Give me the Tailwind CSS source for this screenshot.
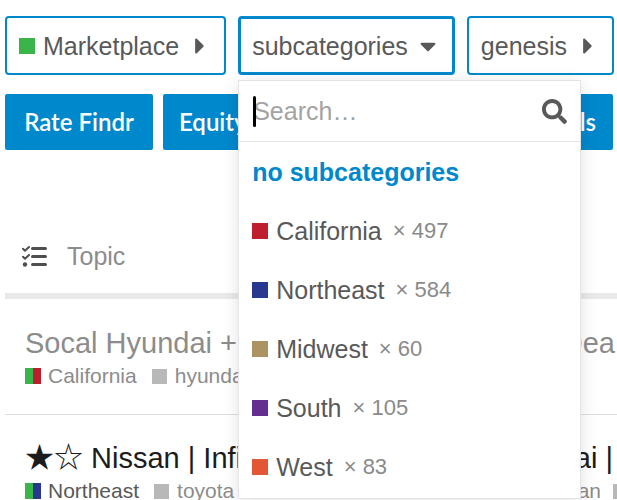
<!DOCTYPE html>
<html lang="en">
<head>
<meta charset="utf-8">
<meta name="viewport" content="width=device-width, initial-scale=1">
<title>Marketplace topics</title>
<script src="https://cdn.jsdelivr.net/npm/@tailwindcss/browser@4"></script>
</head>
<body class="h-screen overflow-hidden bg-white font-['Liberation_Sans','Noto_Sans_CJK_JP',sans-serif] text-[#595959]">
<svg class="hidden">
  <symbol id="caret-right" viewBox="0 0 192 512"><path d="M0 384.662V127.338c0-17.818 21.543-26.741 34.142-14.142l128.662 128.662c7.81 7.81 7.81 20.474 0 28.284L34.142 398.804C21.543 411.404 0 402.48 0 384.662z"/></symbol>
</svg>

<nav aria-label="Filters" class="flex gap-3 pt-4 pl-[5px] text-[25px] leading-[30px]">
  <button type="button" class="flex h-[59px] shrink-0 items-center rounded border-2 border-[#0088cc] pr-[19px] pl-3">
    <span class="mr-2 size-4 bg-[#3ab54a]"></span>
    <span class="mr-4">Marketplace</span>
    <svg class="h-[26px] w-[10px] fill-current" aria-hidden="true"><use href="#caret-right"/></svg>
  </button>

  <div class="relative shrink-0">
    <button type="button" aria-haspopup="listbox" aria-expanded="true" class="flex h-[59px] items-center gap-3 rounded border-3 border-[#0088cc] pr-4 pl-[11px]">
      <span>subcategories</span>
      <svg class="h-[26px] w-4 fill-current" viewBox="0 0 320 512" aria-hidden="true"><path d="M31.3 192h257.3c17.8 0 26.7 21.5 14.1 34.1L174.1 354.8c-7.8 7.8-20.5 7.8-28.3 0L17.2 226.1C4.6 213.5 13.5 192 31.3 192z"/></svg>
    </button>

    <div class="absolute top-full left-0 z-10 mt-[5px] w-[343px] border border-[#e4e4e4] bg-white shadow-[0_3px_16px_rgba(0,0,0,0.12)]">
      <div class="relative flex h-[61px] items-center border-b border-[#e4e4e4] pr-[13px] pl-[14px]">
        <input type="text" aria-label="Search subcategories" placeholder="Search…" class="min-w-0 flex-1 outline-none placeholder:text-[#a3a3a3]">
        <span class="absolute left-[14px] h-[31px] w-[3px] rounded-full bg-black"></span>
        <svg class="size-[25px] fill-current" viewBox="0 0 512 512" aria-hidden="true"><path d="M505 442.7L405.3 343c-4.5-4.5-10.6-7-17-7H372c27.6-35.3 44-79.7 44-128C416 93.1 322.9 0 208 0S0 93.1 0 208s93.1 208 208 208c48.3 0 92.7-16.4 128-44v16.3c0 6.4 2.5 12.5 7 17l99.7 99.7c9.4 9.4 24.6 9.4 33.9 0l28.3-28.3c9.4-9.4 9.4-24.6.1-34zM208 336c-70.7 0-128-57.2-128-128 0-70.7 57.2-128 128-128 70.7 0 128 57.2 128 128 0 70.7-57.2 128-128 128z"/></svg>
      </div>
      <ul class="pb-[2px]">
        <li><button type="button" class="flex h-[59px] w-full items-center px-[13px] font-bold text-[#0088cc]">no subcategories</button></li>
        <li><button type="button" class="flex h-[59px] w-full items-center px-[13px]"><span class="mr-2 size-4 bg-[#bf1e2e]"></span>California<span class="ml-[11px] text-[22px] text-[#8a8a8a]">× 497</span></button></li>
        <li><button type="button" class="flex h-[59px] w-full items-center px-[13px]"><span class="mr-2 size-4 bg-[#283890]"></span>Northeast<span class="ml-[11px] text-[22px] text-[#8a8a8a]">× 584</span></button></li>
        <li><button type="button" class="flex h-[59px] w-full items-center px-[13px]"><span class="mr-2 size-4 bg-[#ab9364]"></span>Midwest<span class="ml-[11px] text-[22px] text-[#8a8a8a]">× 60</span></button></li>
        <li><button type="button" class="flex h-[59px] w-full items-center px-[13px]"><span class="mr-2 size-4 bg-[#652d90]"></span>South<span class="ml-[11px] text-[22px] text-[#8a8a8a]">× 105</span></button></li>
        <li><button type="button" class="flex h-[59px] w-full items-center px-[13px]"><span class="mr-2 size-4 bg-[#e45735]"></span>West<span class="ml-[11px] text-[22px] text-[#8a8a8a]">× 83</span></button></li>
      </ul>
    </div>
  </div>

  <button type="button" class="flex h-[59px] shrink-0 items-center gap-4 rounded border-2 border-[#0088cc] pr-[19px] pl-3">
    <span>genesis</span>
    <svg class="h-[26px] w-[10px] fill-current" aria-hidden="true"><use href="#caret-right"/></svg>
  </button>
</nav>

<div class="mt-[19px] flex gap-[10px] pr-1 pl-[5px] font-['Lato',sans-serif] text-[24px] leading-[30px] font-semibold text-white">
  <a href="#" class="flex h-14 w-[148px] items-center justify-center rounded-xs bg-[#0088cc]">Rate Findr</a>
  <a href="#" class="flex h-14 w-[148px] items-center rounded-xs bg-[#0088cc] pl-4">Equity</a>
  <a href="#" class="ml-auto flex h-14 w-[148px] items-center justify-end rounded-xs bg-[#0088cc] pr-[17px]">Deals</a>
</div>

<main class="pt-[75px] pl-[5px]">
  <div class="flex h-[74px] items-center gap-5 border-b-6 border-[#e9e9e9] pb-1 pl-[17px] text-[25px] text-[#8c8c8c]">
    <button type="button" aria-label="Select topics" class="text-[#4f4f4f]">
      <svg class="h-[22px] w-[25px]" viewBox="0 0 25 22" fill="none" stroke="currentColor" aria-hidden="true">
        <path stroke-width="3" stroke-linecap="round" d="M10.5 2.5H23.5M10.5 10.5H23.5M10.5 18.5H23.5"/>
        <path stroke-width="2" stroke-linecap="round" stroke-linejoin="round" d="M1 2.8 3 4.8 7 1M1 10.8 3 12.8 7 9"/>
        <circle cx="3" cy="18.5" r="2.2" fill="currentColor" stroke="none"/>
      </svg>
    </button>
    <span>Topic</span>
  </div>

  <article class="h-[116px] border-b border-[#dedede] pt-[27px] pl-5 text-[#8c8c8c]">
    <h2 class="flex justify-between pr-[2px] text-[29px] leading-[34px] whitespace-nowrap"><a href="#">Socal Hyundai +</a><a href="#">Dea</a></h2>
    <div class="flex items-center pt-[3px] text-[21px] leading-[26px]">
      <span class="flex"><span class="h-4 w-2 bg-[#3ab54a]"></span><span class="h-4 w-2 bg-[#bf1e2e]"></span></span>
      <a href="#" class="mr-[15px] ml-[7px]">California</a>
      <span class="mr-2 size-[15px] bg-[#b8b8b8]"></span><a href="#">hyundai</a>
    </div>
  </article>

  <article class="pt-[26px] pl-5 text-[#8c8c8c]">
    <h2 class="flex justify-between pr-1 text-[29px] leading-[34px] whitespace-nowrap text-[#1c1c1c]"><a href="#">★☆ Nissan | Infi</a><a href="#">ai |</a></h2>
    <div class="flex items-center pt-[3px] text-[21px] leading-[26px]">
      <span class="flex"><span class="h-4 w-2 bg-[#3ab54a]"></span><span class="h-4 w-2 bg-[#283890]"></span></span>
      <a href="#" class="mr-[15px] ml-[7px] text-[#595959]">Northeast</a>
      <span class="mr-2 size-[15px] bg-[#b8b8b8]"></span><a href="#">toyota</a>
      <a href="#" class="mr-3 ml-auto">nissan</a><span class="h-[15px] w-1 bg-[#b8b8b8]"></span>
    </div>
  </article>
</main>
</body>
</html>
